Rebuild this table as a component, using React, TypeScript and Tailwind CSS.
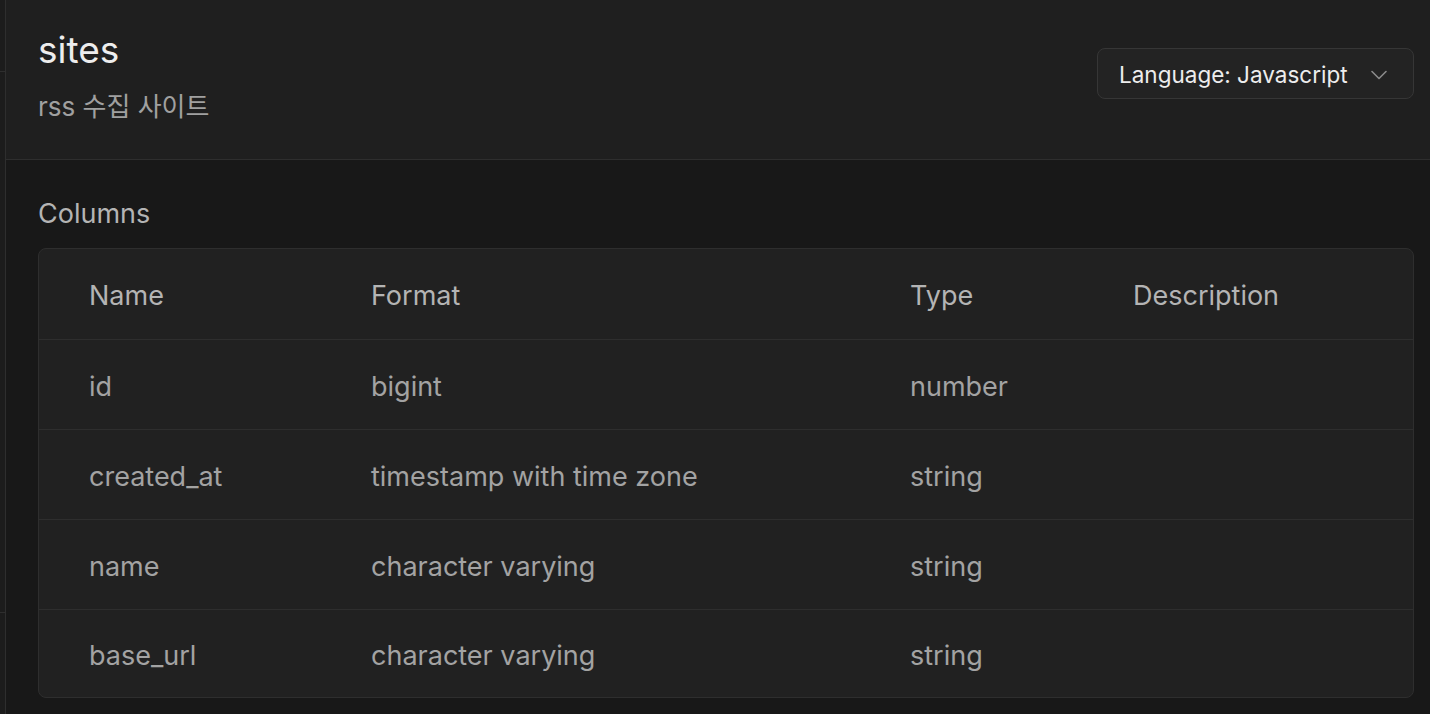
import React from "react";

const rows = [
  { name: "id", format: "bigint", type: "number" },
  { name: "created_at", format: "timestamp with time zone", type: "string" },
  { name: "name", format: "character varying", type: "string" },
  { name: "base_url", format: "character varying", type: "string" },
];

export default function App() {
  return (
    <div
      className="flex h-[714px] w-[1430px] overflow-hidden bg-[#181818]"
      style={{ fontFamily: '"Inter", "Noto Sans CJK KR", sans-serif' }}
    >
      {/* left strip */}
      <div className="flex w-[6px] shrink-0 flex-col border-r border-[#2e2e2e] bg-[#1c1c1c]">
        <div className="h-[72px] border-b border-[#2e2e2e]" />
        <div className="h-[541px] border-b border-[#2e2e2e]" />
      </div>

      <div className="flex min-w-0 flex-1 flex-col">
        {/* header */}
        <div className="flex h-[160px] shrink-0 items-start justify-between border-b border-[#2e2e2e] bg-[#1f1f1f] pl-[32px] pr-[16px]">
          <div className="pt-[27px]">
            <div className="text-[37px] leading-[46px] text-[#ededed]">sites</div>
            <div className="mt-[17px] text-[26px] leading-[34px] text-[#a0a0a0]">rss 수집 사이트</div>
          </div>
          <div className="mt-[48px] flex h-[51px] w-[317px] items-center justify-between rounded-[8px] border border-[#363636] bg-[#232323] pl-[21px] pr-[26px] pt-[3px]">
            <span className="text-[22.5px] text-[#ededed]">Language: Javascript</span>
            <svg width="16" height="10" viewBox="0 0 16 10" fill="none" stroke="#8a8a8a" strokeWidth="1.6" strokeLinecap="round" strokeLinejoin="round">
              <path d="M1 1.5l7 7 7-7" />
            </svg>
          </div>
        </div>

        {/* body */}
        <div className="flex flex-col pl-[32px] pr-[16px]">
          <div className="mt-[37px] text-[27px] leading-[34px] text-[#b4b4b4]">Columns</div>
          <div className="mt-[17px] overflow-hidden rounded-[8px] border border-[#2e2e2e] bg-[#212121]">
            <div className="grid h-[91px] grid-cols-[282px_539px_223px_1fr] items-center border-b border-[#2e2e2e] pl-[50px] pt-[5px] text-[27px] text-[#b4b4b4]">
              <div>Name</div>
              <div>Format</div>
              <div>Type</div>
              <div>Description</div>
            </div>
            {rows.map((r, i) => (
              <div
                key={r.name}
                className={`grid grid-cols-[282px_539px_223px_1fr] items-center pl-[50px] pt-[5px] text-[27px] text-[#a3a3a3] ${i < rows.length - 1 ? "h-[90px] border-b border-[#2e2e2e]" : "h-[87px]"}`}
              >
                <div>{r.name}</div>
                <div>{r.format}</div>
                <div>{r.type}</div>
                <div></div>
              </div>
            ))}
          </div>
        </div>
      </div>
    </div>
  );
}
